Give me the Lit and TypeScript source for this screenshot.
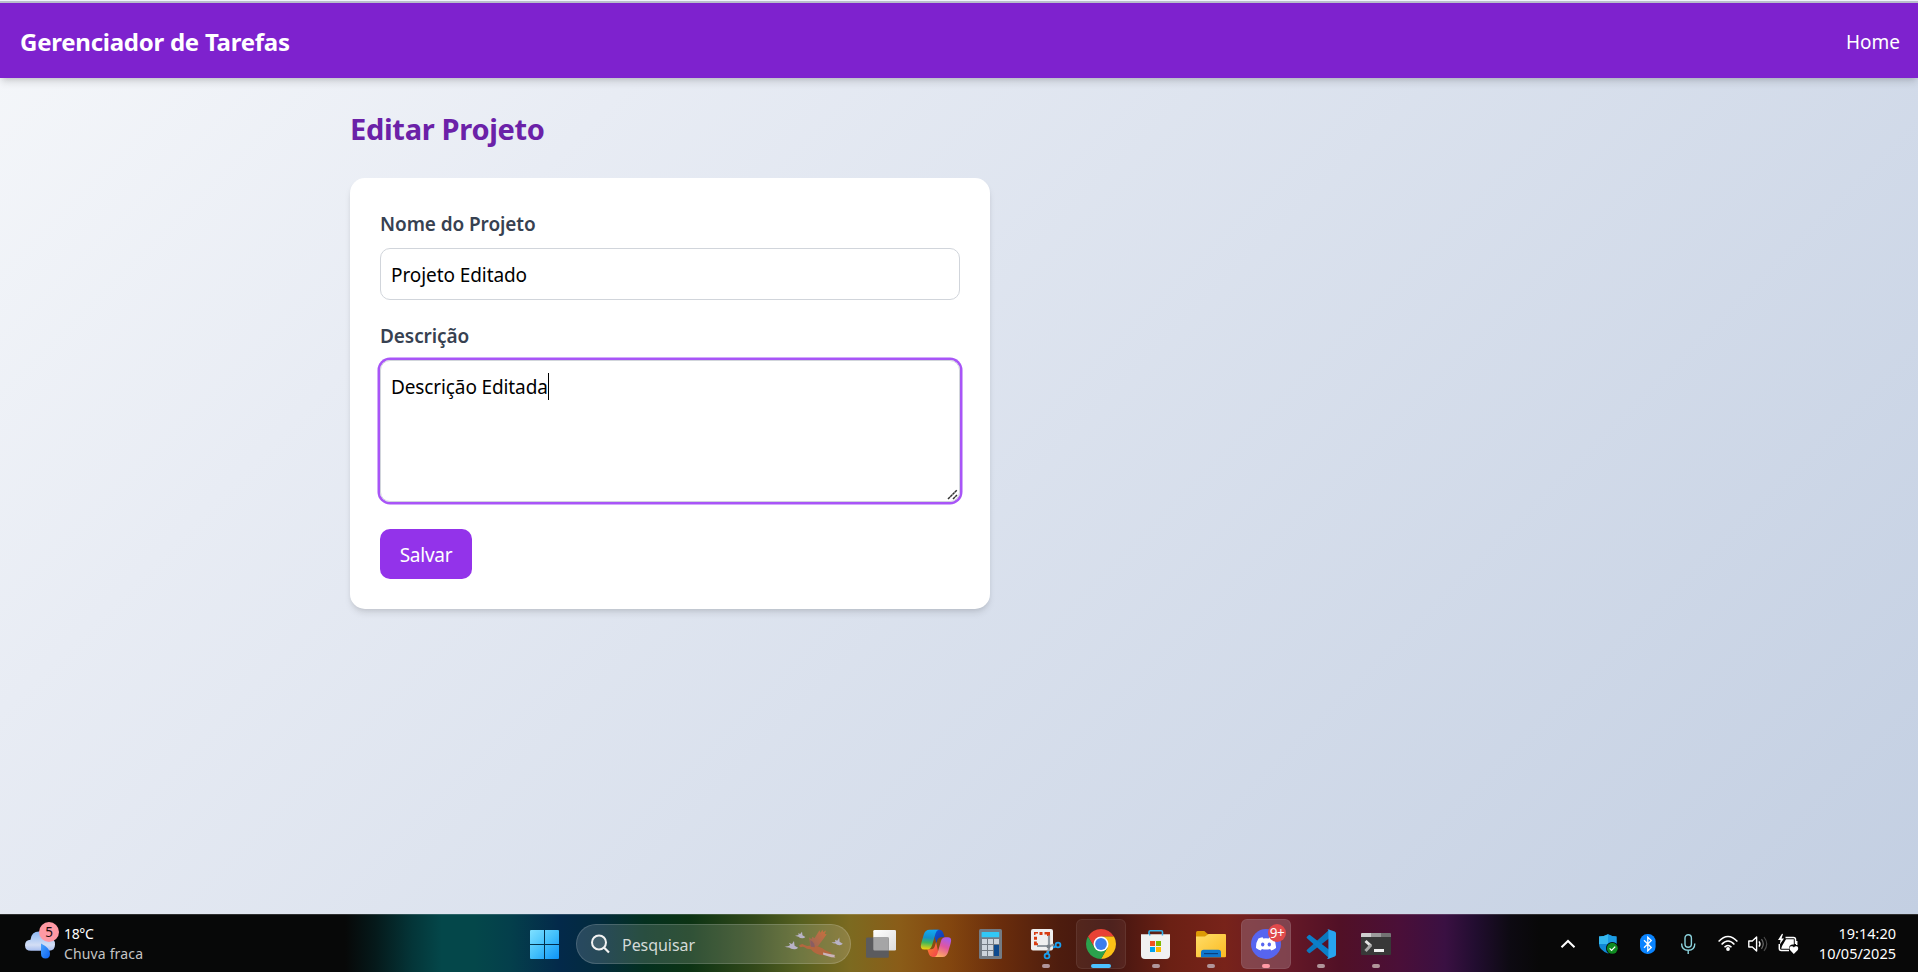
import { LitElement, html, css, svg } from "lit";
import { customElement } from "lit/decorators.js";

const startIcon = svg`
  <defs><linearGradient id="win" gradientUnits="userSpaceOnUse" x1="11" y1="16" x2="40" y2="45">
    <stop offset="0" stop-color="#7fe0ff"/><stop offset=".5" stop-color="#43c0fb"/><stop offset="1" stop-color="#0d93f7"/></linearGradient></defs>
  <path fill="url(#win)" d="M12 16h13v14H11V17q0-1 1-1zM26 16h13q1 0 1 1v13H26zM11 31h14v14H12q-1 0-1-1zM26 31h14v13q0 1-1 1H26z"/>`;

const taskViewIcon = svg`
  <defs><linearGradient id="tv" x1="0" y1="0" x2="1" y2="1"><stop offset="0" stop-color="#fff"/><stop offset="1" stop-color="#dcdcdc"/></linearGradient></defs>
  <rect x="17.3" y="16" width="22.7" height="20.6" rx="1.3" fill="url(#tv)"/>
  <rect x="10" y="23.6" width="22.8" height="20.2" rx="1.3" fill="#5b5b5e"/>
  <path d="M17.3 23.6h15.5v13H18.600q-1.300 0-1.300-1.300z" fill="#a5a5a6"/>`;

const copilotIcon = svg`
  <defs>
    <linearGradient id="cpa" x1=".4" y1="0" x2=".3" y2="1"><stop offset="0" stop-color="#12a9f2"/><stop offset=".4" stop-color="#1591c9"/><stop offset=".65" stop-color="#3fb65a"/><stop offset="1" stop-color="#f6d20c"/></linearGradient>
    <linearGradient id="cpb" x1=".7" y1="0" x2=".3" y2="1"><stop offset="0" stop-color="#a45cf0"/><stop offset=".45" stop-color="#e0569f"/><stop offset="1" stop-color="#ffae5e"/></linearGradient>
    <linearGradient id="cpc" x1="0" y1="0" x2="1" y2="1"><stop offset="0" stop-color="#0a5ee0"/><stop offset="1" stop-color="#1a2f9e"/></linearGradient>
    <linearGradient id="cpd" x1="0" y1="0" x2="1" y2="1"><stop offset="0" stop-color="#ff8a2a"/><stop offset="1" stop-color="#f03e4f"/></linearGradient>
  </defs>
  <path fill="url(#cpc)" d="M22 15.700h6.500q2.700 0 3.600 2.700l1.500 4.800h-3.300q-3 0-4 3l-1 3z"/>
  <path fill="url(#cpd)" d="M16.300 35.300h4q2.600 0 3.500-3l1.300-4.300 2.500 12-2.500 3h-3.500q-2.800 0-3.600-2.700z"/>
  <path fill="url(#cpa)" d="M18.500 15.700h9.300q-2.300.3-3.200 3.600l-3.700 12.500q-1.100 3.700-4.300 3.700h-3.200q-5 0-3-6.800l2.300-8q1.500-5 5.800-5z"/>
  <path fill="url(#cpb)" d="M31.600 43h-8.700q2.500-.3 3.500-3.600l3.600-12.500q1.100-3.700 4.400-3.700h2.800q4.200 0 2.400 6.300l-2.500 8.500q-1.500 5-5.500 5z"/>`;

const calcIcon = svg`
  <rect x="13" y="15" width="23" height="30" rx="1.500" fill="#737b84"/>
  <rect x="15.600" y="18" width="17.600" height="5.300" rx=".5" fill="#31c8f5"/>
  <g fill="#cdd4dc">
    <rect x="16" y="25" width="5" height="5"/><rect x="22" y="25" width="5" height="5"/><rect x="28" y="25" width="5" height="5"/>
    <rect x="16" y="31" width="5" height="5"/><rect x="22" y="31" width="5" height="5"/>
    <rect x="16" y="37" width="5" height="5"/><rect x="22" y="37" width="5" height="5"/></g>
  <rect x="28" y="31" width="5" height="11" fill="#0d4a8f"/>`;

const snipIcon = svg`
  <rect x="10" y="15" width="22" height="21.600" rx="2" fill="#efefef"/>
  <g fill="#d83b10">
    <path d="M13 18h4v1.500h-2.500V21H13zM18.500 18h3v3h-3zM23.500 18h5.500v4h-3v-1.500h-2.500zM13 22.800h3v3h-3zM13 27.500h2.800v1.800H17v2h-4z"/></g>
  <path d="M28 21.500V35l-2 4M16 32h13l4-1.500" fill="none" stroke="#9299a0" stroke-width="2.200"/>
  <circle cx="27.500" cy="32.500" r="2" fill="#777e85"/>
  <circle cx="37" cy="31" r="2.400" fill="none" stroke="#1a9ff0" stroke-width="1.800"/>
  <circle cx="26" cy="42" r="2.400" fill="none" stroke="#1a9ff0" stroke-width="1.800"/>
  <path d="M32 33.500l3-1.200M27.500 37l-.8 2.500" stroke="#1a9ff0" stroke-width="2"/>`;

const chromeIcon = svg`
  <path fill="#e94235" d="M12.010 22.500A15 15 0 0 1 37.990 22.500L25 22.500L18.500 33.750z"/>
  <path fill="#fbc116" d="M37.990 22.500A15 15 0 0 1 25 45L31.500 33.750L25 22.500z"/>
  <path fill="#2ba24c" d="M25 45A15 15 0 0 1 12.010 22.500L18.500 33.750L31.500 33.750z"/>
  <circle cx="25" cy="30" r="7.500" fill="#fff"/><circle cx="25" cy="30" r="5.900" fill="#3b7ded"/>`;

const storeIcon = svg`
  <path d="M18 23v-5q0-1.300 1.300-1.300h10.900q1.300 0 1.300 1.300v5" fill="none" stroke="#35b3ec" stroke-width="1.600"/>
  <path d="M10 20.300h29V41q0 4-4 4H14q-4 0-4-4z" fill="#f1f1f1"/>
  <path d="M18 20h1.500v1.500H18zM30.700 20h1.500v1.500h-1.500z" fill="#35b3ec"/>
  <rect x="19" y="27" width="5" height="5" fill="#f25022"/><rect x="25" y="27" width="5" height="5" fill="#7fba00"/>
  <rect x="19" y="33" width="5" height="5" fill="#00a4ef"/><rect x="25" y="33" width="5" height="5" fill="#ffb900"/>`;

const explorerIcon = svg`
  <defs><linearGradient id="fo" x1="0" y1="0" x2="1" y2="1"><stop offset="0" stop-color="#ffdd68"/><stop offset="1" stop-color="#fbbb22"/></linearGradient></defs>
  <path d="M10 18.500q0-1.500 1.500-1.500h6.800l4 3.500V24H10z" fill="#dd9a05"/>
  <path d="M10 22.500h9l3.500-2.500H39q1 0 1 1v21.300q0 1-1 1H11q-1 0-1-1z" fill="url(#fo)"/>
  <path d="M15 43.300v-5q0-2.600 2.600-2.600h14.800q2.600 0 2.600 2.600v5z" fill="#0f77cd"/>
  <rect x="18" y="39" width="14" height="1.200" fill="#0a3f7d"/>`;

const discordIcon = svg`
  <circle cx="25" cy="30" r="15" fill="#5765f0"/>
  <path fill="#fff" d="M21.600 23.200q-2.300.4-4.200 1.300-2.600 4-2.400 9.600 2.200 1.800 4.800 2.500l1.100-1.700q4.100 1 8.200 0l1.100 1.700q2.600-.7 4.800-2.500.3-5.600-2.400-9.600-1.900-.9-4.200-1.300l-.7 1.200q-2.700-.4-5.400 0z"/>
  <ellipse cx="21.700" cy="30.500" rx="1.700" ry="1.900" fill="#5765f0"/><ellipse cx="28.300" cy="30.500" rx="1.700" ry="1.900" fill="#5765f0"/>
  <circle cx="36" cy="19" r="9" fill="#e04a4c"/>`;

const vscodeIcon = svg`
  <path fill="#0b78be" d="M33.500 15.500L11 35.800q-.8.700-.1 1.500l1.600 1.500q.7.600 1.500.1L33.500 24z"/>
  <path fill="#0b7fc9" d="M33.500 44.500L11 24.200q-.8-.7-.1-1.500l1.600-1.500q.7-.6 1.500-.1L33.500 36z"/>
  <path fill="#27a4f0" d="M32 15.200l6.700 2.300q1.300.7 1.300 2v21q0 1.300-1.300 2L32 45q-1.200-.3-.5-1.200.9.400.9-1V17q0-1.200-.9-1z"/>`;

const terminalIcon = svg`
  <path d="M10 20q0-1 1-1h9v4H10z" fill="#cfcfcf"/><path d="M20 19h10v4H20z" fill="#9c9c9c"/><path d="M30 19h9q1 0 1 1v3H30z" fill="#737373"/>
  <path d="M10 23h30v17q0 1-1 1H11q-1 0-1-1z" fill="#383838"/>
  <path d="M14.500 27l5.500 5" stroke="#e4e4e4" stroke-width="3"/><path d="M20 31l-5.500 6" stroke="#a9a9a9" stroke-width="3"/>
  <rect x="23" y="35" width="10" height="3" fill="#f0f0f0"/>`;

const birds = svg`
  <defs><linearGradient id="wing" x1="1" y1="0" x2="0" y2="1"><stop offset="0" stop-color="#c9713c"/><stop offset="1" stop-color="#9a6558"/></linearGradient></defs>
  <g fill="#b9b3c6">
    <path d="M1.500 17.300q3 .3 4.500-.6l1.200-.6L5.800 13.800l3.200 1.300L11 12l.6 4.800 3.500 2q-1 1.200-3 1.400-4 .3-6-1.700-2.600.1-4.600-1.200z"/>
    <path d="M12 6.500q2.200.3 3.600-.4L15.200 4.200l2 .9L19 2.700l.5 3.500 2.800 1.800q-1 1.200-2.800 1.300-2.600.1-4-1.600-2-.1-3.500-1.200z"/>
    <path d="M48.500 13.200q2.500.3 4-.5L52 10.700l2.200 1L56.300 8.500l.3 4.300 3.200 2q-1.200 1.300-3 1.400-3 .1-4.300-1.800-2.300.1-4-1.200z"/></g>
  <path fill="url(#wing)" d="M27.500 17.500L26 8.200l2.500 2 .8-2.500 2.200 1.500 5-8 .8 2.600 2.500-3 .2 2.500 3-1.700-1.300 3.400 2 .2-3.200 4.600-5.200 7-4.500 2.400z"/>
  <path fill="#b3673f" d="M16 16.500l1.800-.9q1.500-1 3 .1l3.500 1.400q5.500-1.400 11 .3 4.500 1.200 7.400 4.200l6.300 2.700q-6 2.800-12.500 1.400-6-1.600-8.500-5.500-4 .2-7-2.300-2.200-.6-3.200.4-1.400-.5-1.800-1.800z"/>
  <path fill="#8a5d62" d="M27.300 11q4.500 2.500 4.500 7.300l-4-.6z"/>
  <path fill="#cbb3ba" d="M40 23.500l5.500 1.200 6.700 1.400-1 .9 1.200 1.500-4.200-.3-4-1.300-4-1.200z"/>`;

const trayIcons = [
  svg`<path d="M3.500 13.200L10 7l6.500 6.200" fill="none" stroke="#fff" stroke-width="2"/>`,
  svg`<path d="M1 2.500Q6 2.500 10 .3q4 2.200 8.500 2.200V10q0 6-8.500 9.500Q1 16 1 10z" fill="#1187d4"/>
      <path d="M1 2.500Q6 2.500 10 .3V10H1z" fill="#35b8ef"/><path d="M10 .3q4 2.200 8.500 2.200V10H10z" fill="#1c9ce3"/>
      <circle cx="14.300" cy="14.300" r="6.300" fill="#080808"/><circle cx="14.300" cy="14.300" r="5.500" fill="#0f8a20"/>
      <path d="M11.600 14.400l2 2 3.600-3.800" fill="none" stroke="#fff" stroke-width="1.300"/>`,
  svg`<rect x="2" width="15.600" height="20" rx="7.300" fill="#0a84ff"/>
      <path d="M6 6.300l7.300 7.200-3.500 3.300V3.200l3.500 3.300L6 13.700" fill="none" stroke="#fff" stroke-width="1.300"/>`,
  svg`<g fill="none" stroke="#8cd3dd" stroke-width="1.400"><rect x="7" y=".8" width="6.400" height="12.400" rx="3.200"/><path d="M3.600 9.500q0 6.700 6.600 6.700t6.600-6.700M10.200 16.200V20"/></g>`,
  svg`<g fill="none" stroke="#fff" stroke-width="1.500"><path d="M.6 7.500Q10-2.500 19.400 7.500M3.600 10.500q6.400-7 12.800 0M6.500 13.300q3.500-3.700 7 0"/></g><circle cx="10" cy="15" r="1.900" fill="#fff"/>`,
  svg`<path d="M.8 7h3.500L8.600 3v14L4.300 13H.8z" fill="none" stroke="#fff" stroke-width="1.400" stroke-linejoin="round"/>
      <path d="M11 7.300q2 2.700 0 5.400" fill="none" stroke="#fff" stroke-width="1.300"/><path d="M13.500 5.200q3.500 4.800 0 9.600" fill="none" stroke="#6c6c6c" stroke-width="1.200"/><path d="M16 3q5.500 7 0 14" fill="none" stroke="#4a4a4a" stroke-width="1.200"/>`,
  svg`<path d="M7.500 3.500h8q2 0 2 2V10M18.700 7v4M1.300 10v4.500q0 2 2 2H11" fill="none" stroke="#fff" stroke-width="1.500"/>
      <path d="M8 5.300h7.800v5.200q-2.500-.4-4 1.200-.8 1.200-.6 3H3.300q0-1.500 1-3.200z" fill="#fff"/><path d="M4-.2L0 6h2.500L1.800 10.500 6 4.500H3.500L5 0z" fill="#fff"/>
      <path d="M15.800 19.900l-3.800-3.900q-1.300-2.700 1-3.700 2-.6 2.900 1.200 1-1.800 2.900-1.200 2.200 1 1 3.700z" fill="#fff"/>`,
];

const apps = [
  { icon: taskViewIcon, state: "" },
  { icon: copilotIcon, state: "" },
  { icon: calcIcon, state: "" },
  { icon: snipIcon, state: "running" },
  { icon: chromeIcon, state: "active" },
  { icon: storeIcon, state: "running" },
  { icon: explorerIcon, state: "running" },
  { icon: discordIcon, state: "running alert", badge: "9+" },
  { icon: vscodeIcon, state: "running" },
  { icon: terminalIcon, state: "running" },
];

@customElement("task-bar")
export class TaskBar extends LitElement {
  static styles = css`
    :host {
      display: flex; box-sizing: border-box; height: 58px; flex: none;
      font-family: "Segoe UI", "Noto Sans", sans-serif; font-size: 14px; color: #fff;
      box-shadow: inset 0 1px rgba(255, 255, 255, 0.16);
      background: linear-gradient(90deg, #070808 0, #070808 345px, #05191a 375px, #043538 412px, #04474a 442px, #04474a 475px, #043f4b 510px, #03294a 560px, #032b3c 600px, #04301f 645px, #0c3314 690px, #33491a 755px, #566020 800px, #7c6a20 850px, #8a5c18 900px, #83460f 950px, #6a2d0c 1000px, #4d1c0e 1060px, #431510 1110px, #6b2014 1170px, #78231a 1225px, #661926 1285px, #511026 1340px, #4a0f38 1400px, #3a1042 1445px, #220d30 1475px, #0d0a12 1510px, #080808 1540px, #080808 100%);
    }
    svg { display: block; }
    .left { width: 519px; display: flex; padding-left: 22px; box-sizing: border-box; }
    .weather { position: relative; width: 42px; }
    .badge { position: absolute; left: 17px; top: 8px; width: 20px; height: 20px; border-radius: 50%; background: #ff99a4; color: #1b0b0d; font-size: 13.500px; line-height: 20px; text-align: center; }
    .lines { padding-top: 10px; line-height: 20px; }
    .lines div { white-space: nowrap; }
    .temp { letter-spacing: -0.350px; }
    .cond { color: #c4c4c4; letter-spacing: 0.150px; }
    .center { display: flex; flex: 1; }
    .search { display: flex; align-items: center; box-sizing: border-box; width: 275px; height: 40px; margin: 10px 5px 0 7px; border-radius: 20px; padding: 0 7px 0 13px; background: rgba(255, 255, 255, 0.15); border: 1px solid rgba(255, 255, 255, 0.15); }
    .search .label { flex: 1; margin-left: 12px; font-size: 16px; line-height: 22px; color: #d4dad8; letter-spacing: -0.050px; padding-top: 1px; }
    .app { position: relative; width: 50px; height: 58px; margin-right: 5px; }
    .start { margin-right: 0; }
    .app svg { position: relative; }
    .active::before, .alert::before { content: ""; position: absolute; box-sizing: border-box; left: 0; top: 5px; width: 50px; height: 50px; border-radius: 6px; background: rgba(255, 255, 255, 0.06); border: 1px solid rgba(255, 255, 255, 0.07); }
    .alert::before { background: rgba(142, 90, 102, 0.64); }
    .running::after, .active::after { content: ""; position: absolute; left: 21px; top: 50px; width: 8px; height: 4px; border-radius: 2px; background: #b0959a; }
    .alert::after { background: #ff99a4; }
    .active::after { left: 15px; width: 20px; background: #4cc2ff; }
    .count { position: absolute; left: 27px; top: 10px; width: 18px; line-height: 18px; text-align: center; font-size: 13.500px; letter-spacing: -0.500px; }
    .tray { display: flex; align-items: center; gap: 10px; padding-right: 22px; }
    .tray svg { overflow: visible; margin-top: 2px; }
    .wide { margin-right: 10px; }
    .clock { width: 88px; text-align: right; line-height: 20px; font-size: 14.500px; padding-bottom: 1px; letter-spacing: 0; white-space: nowrap; }
  `;

  render() {
    return html`
      <div class="left">
        <div class="weather">
          <svg width="42" height="58" viewBox="0 0 42 58">
            <defs>
              <linearGradient id="cl" x1="0" y1="0" x2="0" y2="1"><stop offset="0" stop-color="#8db8f4"/><stop offset=".7" stop-color="#d3def5"/><stop offset="1" stop-color="#a8bff0"/></linearGradient>
              <linearGradient id="dr" x1="0" y1="0" x2="1" y2="1"><stop offset="0" stop-color="#4ba3fb"/><stop offset="1" stop-color="#0a62f5"/></linearGradient>
            </defs>
            <path fill="url(#cl)" d="M9 36.700q-6 0-6-5.500 0-5.200 5.500-5.500Q9.500 17.500 17 17.500q6 0 8.500 6 7.500.2 7.500 7 0 6.200-6 6.200z"/>
            <path fill="url(#dr)" d="M19 29.500q9 4.500 9 10 0 5-4.500 5t-4.500-5z"/>
          </svg>
          <div class="badge">5</div>
        </div>
        <div class="lines"><div class="temp">18°C</div><div class="cond">Chuva fraca</div></div>
      </div>
      <div class="center">
        <div class="app start"><svg width="50" height="58" viewBox="0 0 50 58">${startIcon}</svg></div>
        <div class="search">
          <svg width="20" height="20" viewBox="0 0 20 20"><circle cx="9" cy="8.500" r="7" fill="rgba(255,255,255,.12)" stroke="#f2f2f2" stroke-width="2"/><path d="M14 13.500l5 5" stroke="#f2f2f2" stroke-width="2.200"/></svg>
          <div class="label">Pesquisar</div>
          <svg width="60" height="30" viewBox="0 0 60 30">${birds}</svg>
        </div>
        ${apps.map(
          (a) => html`<div class="app ${a.state}">
            <svg width="50" height="58" viewBox="0 0 50 58">${a.icon}</svg>
            ${a.badge ? html`<div class="count">${a.badge}</div>` : ""}
          </div>`
        )}
      </div>
      <div class="tray">
        ${trayIcons.map((t, i) => html`<svg class=${i < 4 ? "wide" : ""} width="20" height="20" viewBox="0 0 20 20">${t}</svg>`)}
        <div class="clock"><div>19:14:20</div><div>10/05/2025</div></div>
      </div>
    `;
  }
}

@customElement("app-root")
export class AppRoot extends LitElement {
  static styles = css`
    :host { display: flex; flex-direction: column; width: 100%; height: 972px; overflow: hidden; font-family: "Segoe UI", "Noto Sans", sans-serif; font-size: 19px; line-height: 30px; }
    .edge { flex: none; height: 1px; background: #eff2fb; border-bottom: 2px solid #b9bfcb; }
    .page { flex: 1; background: linear-gradient(135deg, #f5f7fa 0%, #e8ecf4 25%, #c3cfe2 100%); }
    header { display: flex; justify-content: space-between; align-items: center; box-sizing: border-box; height: 75px; padding: 2px 18px 0 20px; background: #7e22ce; color: #fff; box-shadow: 0 5px 7.500px -1px rgba(0, 0, 0, 0.13), 0 2.500px 5px -2.500px rgba(0, 0, 0, 0.13); }
    .brand { font-size: 24px; font-weight: 700; letter-spacing: -0.250px; }
    .home { font-size: 19px; }
    main { width: 1218px; margin: 0 auto; padding-top: 31px; }
    h1 { margin: 0 0 29px; font-size: 29px; line-height: 40px; font-weight: 700; color: #6b21a8; letter-spacing: -0.300px; }
    .card { box-sizing: border-box; width: 640px; height: 431px; padding: 31px 30px 29px; border-radius: 15px; background: #fff; box-shadow: 0 5px 7.500px -1px rgba(0, 0, 0, 0.1), 0 2.500px 5px -2.500px rgba(0, 0, 0, 0.1); }
    label { display: block; margin-bottom: 9px; font-weight: 600; color: #374151; letter-spacing: -0.080px; }
    .field { box-sizing: border-box; border: 1px solid #d1d5db; border-radius: 10px; padding: 11px 10px 9px; color: #000; letter-spacing: -0.080px; }
    .name { height: 52px; margin-bottom: 21px; }
    .desc { position: relative; height: 142px; letter-spacing: -0.120px; box-shadow: 0 0 0 2.500px #a855f7; }
    .caret { position: absolute; top: 12px; width: 1px; height: 27px; background: #000; }
    .grip { position: absolute; right: 1px; bottom: 1px; display: block; }
    button { display: block; height: 50px; margin-top: 27px; padding: 1px 0 0; width: 92px; border: 0; border-radius: 10px; background: #9333ea; color: #fff; font: inherit; letter-spacing: -0.250px; text-align: center; }
  `;

  render() {
    return html`
      <div class="edge"></div>
      <div class="page">
        <header><span class="brand">Gerenciador de Tarefas</span><span class="home">Home</span></header>
        <main>
          <h1>Editar Projeto</h1>
          <div class="card">
            <label>Nome do Projeto</label>
            <div class="field name">Projeto Editado</div>
            <label>Descrição</label>
            <div class="field desc">Descrição Editada<span class="caret"></span>
              <svg class="grip" width="11" height="11" viewBox="0 0 11 11"><path d="M1 10l9-9M6 10l4-4" stroke="#333" stroke-width="1.500" stroke-dasharray="2.800 .4"/></svg>
            </div>
            <button>Salvar</button>
          </div>
        </main>
      </div>
      <task-bar></task-bar>
    `;
  }
}
